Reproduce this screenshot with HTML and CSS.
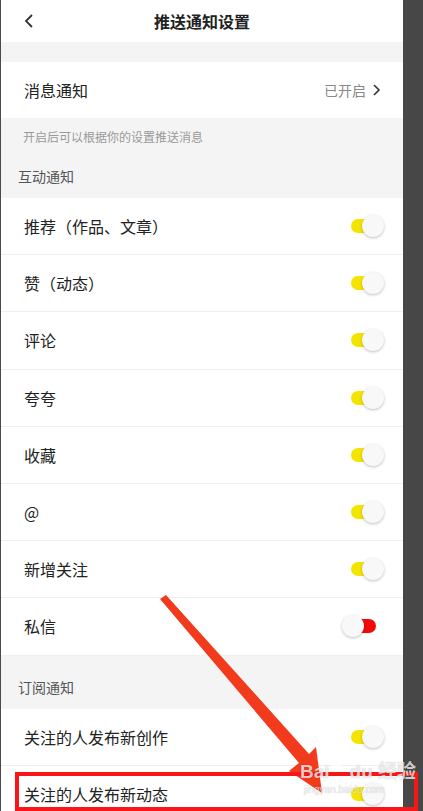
FILE: index.html
```html
<!DOCTYPE html>
<html lang="zh-CN">
	<head>
		<meta charset="UTF-8" />
		<meta name="viewport" content="width=device-width, initial-scale=1.0" />
		<title>推送通知设置</title>
		<link rel="stylesheet" href="styles.css">
	</head>
	<body>
		<div class="screen">
			<header class="topbar">
				<svg class="back" width="12" height="16" viewBox="0 0 12 16">
					<polyline points="9,2 3,8 9,14" fill="none" stroke="#333" stroke-width="1.8" />
				</svg>
				<h1>推送通知设置</h1>
			</header>
			<div class="gap"></div>
			<div class="row main-row">
				<span>消息通知</span>
				<span class="status">已开启
					<svg width="9" height="14" viewBox="0 0 9 14">
						<polyline points="2,2 7,7 2,12" fill="none" stroke="#333" stroke-width="1.6" />
					</svg>
				</span>
			</div>
			<p class="hint">开启后可以根据你的设置推送消息</p>
			<h2 class="group-title">互动通知</h2>
			<ul class="list">
				<li class="row"><span>推荐（作品、文章）</span><i class="switch on"></i></li>
				<li class="row"><span>赞（动态）</span><i class="switch on"></i></li>
				<li class="row"><span>评论</span><i class="switch on"></i></li>
				<li class="row"><span>夸夸</span><i class="switch on"></i></li>
				<li class="row"><span>收藏</span><i class="switch on"></i></li>
				<li class="row"><span>@</span><i class="switch on"></i></li>
				<li class="row"><span>新增关注</span><i class="switch on"></i></li>
				<li class="row"><span>私信</span><i class="switch off"></i></li>
			</ul>
			<h2 class="group-title sub">订阅通知</h2>
			<ul class="list">
				<li class="row"><span>关注的人发布新创作</span><i class="switch on"></i></li>
				<li class="row"><span>关注的人发布新动态</span><i class="switch on"></i></li>
			</ul>
		</div>

		<svg class="marks" width="423" height="811" viewBox="0 0 423 811">
			<polygon points="160,599 166,595 309,754 316,747 322,793 289,771 299,763" fill="#f23a1c" />
			<rect x="17" y="774" width="399" height="35" fill="none" stroke="#f81616" stroke-width="4" />
			<g fill="rgba(255,255,255,0.75)">
				<circle cx="337" cy="767" r="5" />
				<circle cx="331" cy="759" r="2" />
				<circle cx="336" cy="756" r="2" />
				<circle cx="341" cy="756" r="2" />
				<circle cx="345" cy="760" r="2" />
			</g>
		</svg>
		<div class="watermark">
			<span class="wm-logo">Bai<em class="wm-gap"></em>du 经验</span>
			<span class="wm-url">jingyan.baidu.com</span>
		</div>
	</body>
</html>
```

FILE: styles.css
```css
body {
	margin: 0;
	height: 811px;
	overflow: hidden;
	display: flex;
	background: #474747;
	font-family: "Noto Sans CJK SC", "Noto Sans", sans-serif;
	color: #222;
}

.screen {
	width: 402px;
	border-left: 1px solid #4a4a4a;
	background: #f4f4f4;
}

.topbar {
	height: 42px;
	display: flex;
	align-items: center;
	justify-content: center;
	position: relative;
	background: #fff;
}

.back {
	position: absolute;
	left: 22px;
	top: 13px;
}

h1 {
	margin: 0;
	font-size: 16px;
	font-weight: 700;
	color: #222;
}

.gap {
	height: 20px;
}

.list {
	list-style: none;
	margin: 0;
	padding: 0;
}

.row {
	box-sizing: border-box;
	height: 57.2px;
	display: flex;
	align-items: center;
	justify-content: space-between;
	padding: 0 19px 0 23px;
	background: #fff;
	border-bottom: 1px solid #efefef;
	font-size: 16px;
}

.main-row {
	height: 56px;
	border-bottom: none;
	padding-right: 22px;
}

.status {
	display: flex;
	align-items: center;
	gap: 6px;
	font-size: 14px;
	color: #888;
}

.hint {
	margin: 0;
	height: 38px;
	line-height: 38px;
	padding-left: 22px;
	font-size: 12px;
	color: #999;
}

.group-title {
	margin: 0;
	height: 40px;
	line-height: 40px;
	padding: 0 0 2px 17px;
	font-size: 14px;
	font-weight: 400;
	color: #555;
}

.group-title.sub {
	padding-top: 11px;
}

.switch {
	position: relative;
	width: 42px;
	height: 22px;
}

.switch::before {
	content: "";
	position: absolute;
	left: 9px;
	top: 4px;
	width: 25px;
	height: 14px;
	border-radius: 7px;
	background: #f5e400;
}

.switch.off::before {
	background: #f20a0a;
}

.switch::after {
	content: "";
	position: absolute;
	right: 0;
	top: 0;
	width: 22px;
	height: 22px;
	border-radius: 50%;
	background: #f8f8f8;
	box-shadow: 0 1px 3px rgba(0, 0, 0, 0.25);
}

.switch.off::after {
	right: auto;
	left: 0;
}

.marks {
	position: absolute;
	left: 0;
	top: 0;
	pointer-events: none;
}

.watermark {
	position: absolute;
	left: 300px;
	top: 760px;
	display: flex;
	flex-direction: column;
	white-space: nowrap;
	color: rgba(255, 255, 255, 0.75);
	text-shadow: 0 0 1px rgba(0, 0, 0, 0.3);
	pointer-events: none;
}

.wm-logo {
	font-family: "Liberation Sans", "Noto Sans CJK SC", sans-serif;
	font-size: 19px;
	font-weight: 700;
	line-height: 24px;
}

.wm-gap {
	display: inline-block;
	width: 20px;
}

.wm-url {
	font-family: "Liberation Sans", sans-serif;
	font-size: 10px;
	line-height: 12px;
	padding-left: 4px;
}
```
